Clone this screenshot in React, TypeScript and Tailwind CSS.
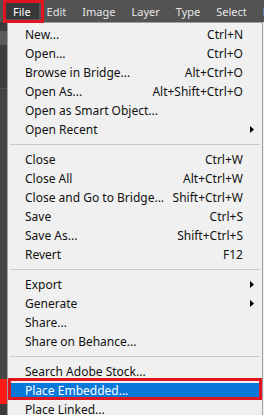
import React from "react";

type Item = { label: string; shortcut?: string; sub?: boolean; active?: boolean } | "sep";

const items: Item[] = [
  { label: "New...", shortcut: "Ctrl+N" },
  { label: "Open...", shortcut: "Ctrl+O" },
  { label: "Browse in Bridge...", shortcut: "Alt+Ctrl+O" },
  { label: "Open As...", shortcut: "Alt+Shift+Ctrl+O" },
  { label: "Open as Smart Object..." },
  { label: "Open Recent", sub: true },
  "sep",
  { label: "Close", shortcut: "Ctrl+W" },
  { label: "Close All", shortcut: "Alt+Ctrl+W" },
  { label: "Close and Go to Bridge...", shortcut: "Shift+Ctrl+W" },
  { label: "Save", shortcut: "Ctrl+S" },
  { label: "Save As...", shortcut: "Shift+Ctrl+S" },
  { label: "Revert", shortcut: "F12" },
  "sep",
  { label: "Export", sub: true },
  { label: "Generate", sub: true },
  { label: "Share..." },
  { label: "Share on Behance..." },
  "sep",
  { label: "Search Adobe Stock..." },
  { label: "Place Embedded...", active: true },
  { label: "Place Linked..." },
];

const bar = ["File", "Edit", "Image", "Layer", "Type", "Select", "Fi"];

export default function App() {
  return (
    <div
      className="relative w-[264px] h-[415px] overflow-hidden bg-[#535353] text-[12px] leading-none"
      style={{ fontFamily: '"Noto Sans", "Liberation Sans", sans-serif' }}
    >
      {/* menu bar */}
      <div className="relative h-[22px] flex items-center pl-[5px] text-[11px] text-[#e6e6e6] whitespace-nowrap">
        {bar.map((b, i) => (
          <span
            key={b}
            className={`px-2 h-[16px] flex items-center ${i === 0 ? "bg-[#383838] text-white" : ""}`}
          >
            {b}
          </span>
        ))}
        <div className="absolute left-[3px] top-0 w-[41px] h-[23px] border-[3px] border-[#e0151f]" />
      </div>

      <div className="flex h-[393px]">
        {/* left tool strip */}
        <div className="w-[7px] flex flex-col bg-[#3c3c3c]">
          <div className="h-[9px]" />
          <div className="h-[14px] bg-[#5a5a5a]" />
          <div className="h-[43px]" />
          <div className="h-[1px] bg-[#555555]" />
          <div className="h-[290px] bg-[#444444]" />
          <div className="h-[25px] bg-[#ff1a1a]" />
          <div className="flex-1" />
        </div>

        {/* dropdown */}
        <div className="w-[256px] bg-[#f0f0f0] border-l border-r border-t border-[#a0a0a0] pt-[2px] text-[#111]">
          {items.map((it, i) =>
            it === "sep" ? (
              <div key={i} className="h-[11px] flex items-center px-[2px]">
                <div className="h-[1px] w-full bg-[#cacaca]" />
              </div>
            ) : (
              <div key={i} className="relative h-[19px] flex items-stretch">
                <div
                  className={`flex-1 flex items-center pl-[17px] ${it.active ? "bg-[#0a78d8] text-white my-[2px]" : ""}`}
                >
                  <span className="flex-1 whitespace-nowrap">{it.label}</span>
                  {it.shortcut && <span className="whitespace-nowrap">{it.shortcut}</span>}
                  <span className="w-[19px] h-full flex items-center pl-[7px]">
                    {it.sub && (
                      <svg width="4" height="7" viewBox="0 0 4 7">
                        <path d="M0 0 L4 3.5 L0 7 Z" fill="#000" />
                      </svg>
                    )}
                  </span>
                </div>
                {it.active && (
                  <div className="absolute left-0 right-0 -top-[3px] bottom-0 border-[3px] border-[#e0151f]" />
                )}
              </div>
            )
          )}
        </div>
        <div className="flex-1 bg-[#f0f0f0]" />
      </div>
    </div>
  );
}
